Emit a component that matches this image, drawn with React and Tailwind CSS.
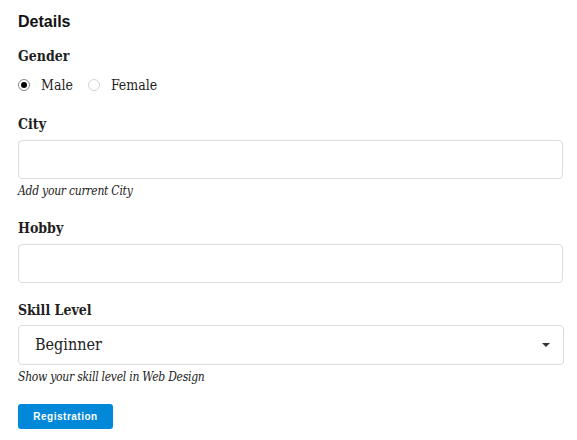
export default function App() {
  return (
    <div className="w-[577px] h-[440px] bg-white pl-[18px] pr-[14px] pt-[12px] text-[#1f1f1f]">
      <h1 className="text-[16px] leading-[20px] font-bold font-['Liberation_Sans',Arial,sans-serif] text-[#111]">Details</h1>

      <div className="mt-[14px] text-[14px] leading-[20px] font-bold font-['DejaVu_Serif',serif] font-stretch-condensed">Gender</div>
      <div className="mt-[9px] h-[20px] flex items-center text-[14px] font-['DejaVu_Serif',serif] font-stretch-condensed">
        <span className="w-[12px] h-[12px] rounded-full border border-[#8a8a8a] flex items-center justify-center">
          <span className="w-[6px] h-[6px] rounded-full bg-black" />
        </span>
        <span className="ml-[11px]">Male</span>
        <span className="ml-[15px] w-[12px] h-[12px] rounded-full border border-[#d4d4d4]" />
        <span className="ml-[11px]">Female</span>
      </div>

      <div className="mt-[19px] text-[14px] leading-[20px] font-bold font-['DejaVu_Serif',serif] font-stretch-condensed">City</div>
      <div className="mt-[6px] h-[39px] rounded-[4px] border border-[#dcdcdc]" />
      <div className="mt-[4px] text-[12px] leading-[16px] italic tracking-[-0.25px] font-['DejaVu_Serif',serif] font-stretch-condensed text-[#222]">Add your current City</div>

      <div className="mt-[19px] text-[14px] leading-[20px] font-bold font-['DejaVu_Serif',serif] font-stretch-condensed">Hobby</div>
      <div className="mt-[6px] h-[39px] rounded-[4px] border border-[#dcdcdc]" />

      <div className="mt-[17px] text-[14px] leading-[20px] font-bold font-['DejaVu_Serif',serif] font-stretch-condensed">Skill Level</div>
      <div className="mt-[5px] h-[40px] mr-[-1px] rounded-[4px] border border-[#dcdcdc] flex items-center pl-[16px] pr-[13px]">
        <span className="flex-1 text-[16px] font-['DejaVu_Serif',serif] font-stretch-condensed text-[#222]">Beginner</span>
        <svg width="8" height="4" viewBox="0 0 8 4"><path d="M0 0h8L4 4z" fill="#333" /></svg>
      </div>
      <div className="mt-[4px] text-[12px] leading-[16px] italic tracking-[-0.25px] font-['DejaVu_Serif',serif] font-stretch-condensed text-[#222]">Show your skill level in Web Design</div>

      <button className="mt-[19px] w-[95px] h-[25px] rounded-[3px] bg-[#0288d8] text-white text-[10px] font-bold tracking-[0.5px] font-['Liberation_Sans',Arial,sans-serif] flex items-center justify-center">Registration</button>
    </div>
  );
}
